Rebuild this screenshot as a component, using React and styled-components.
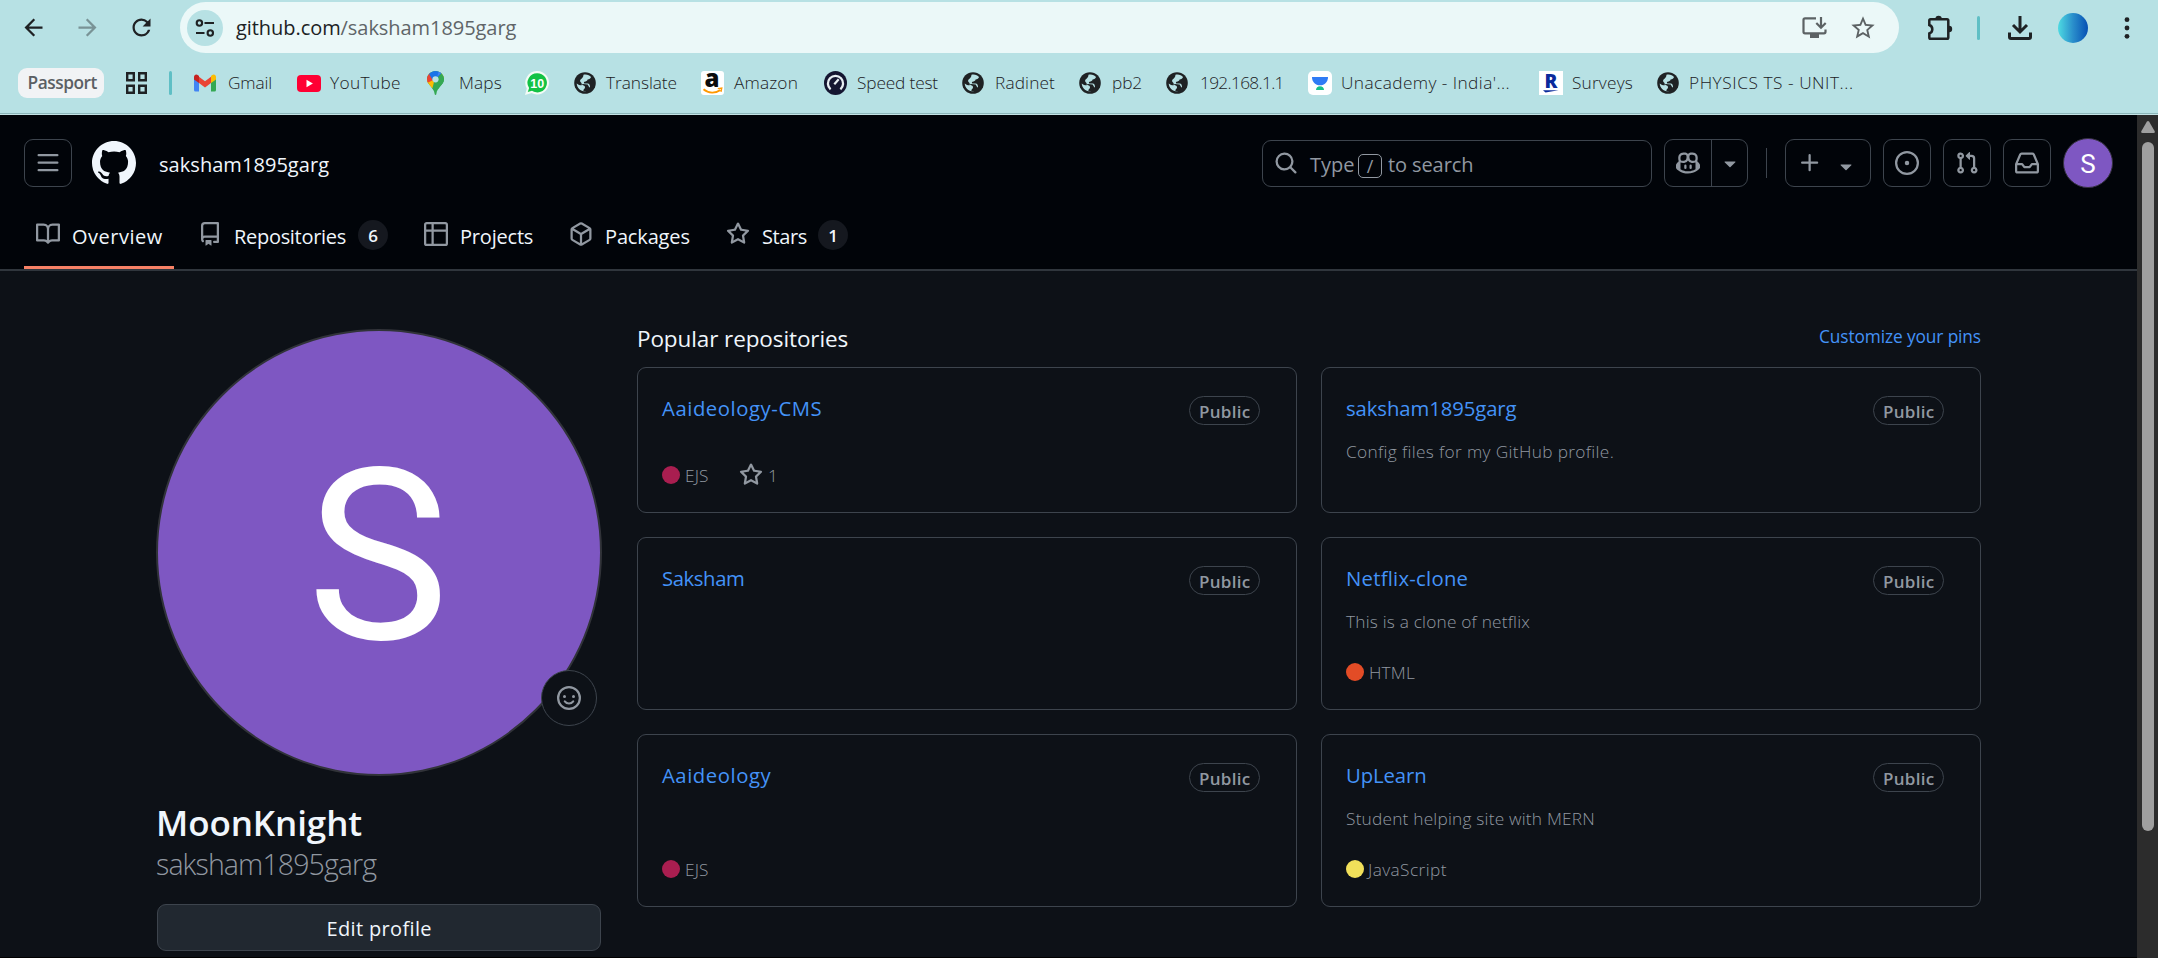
import React from "react";
import styled, { createGlobalStyle } from "styled-components";
import { MdArrowBack, MdArrowForward, MdRefresh, MdStarBorder } from "react-icons/md";

const GlobalStyle = createGlobalStyle`
  * { box-sizing: border-box; }
  html, body { margin: 0; padding: 0; background: #0d1117; overflow: hidden; }
  body { font-family: "Open Sans", "Noto Sans", sans-serif; }
`;

/* ---------- shared parts ---------- */

const Text = styled.span`
  display: block;
  flex: none;
  width: ${(p) => p.$w}px;
  letter-spacing: ${(p) => p.$ls || 0}px;
  white-space: nowrap;
`;

const Gap = styled.span`
  flex: none;
  width: ${(p) => p.$w}px;
`;

const OCTICONS = {
  bars: "M1 2.75A.75.75 0 0 1 1.75 2h12.5a.75.75 0 0 1 0 1.5H1.75A.75.75 0 0 1 1 2.75Zm0 5A.75.75 0 0 1 1.75 7h12.5a.75.75 0 0 1 0 1.5H1.75A.75.75 0 0 1 1 7.75ZM1.75 12h12.5a.75.75 0 0 1 0 1.5H1.75a.75.75 0 0 1 0-1.5Z",
  mark: "M8 0c4.42 0 8 3.58 8 8a8.013 8.013 0 0 1-5.45 7.59c-.4.08-.55-.17-.55-.38 0-.27.01-1.13.01-2.2 0-.75-.25-1.23-.54-1.48 1.78-.2 3.65-.88 3.65-3.95 0-.88-.31-1.59-.82-2.15.08-.2.36-1.02-.08-2.12 0 0-.67-.22-2.2.82-.64-.18-1.32-.27-2-.27-.68 0-1.36.09-2 .27-1.53-1.03-2.2-.82-2.2-.82-.44 1.1-.16 1.92-.08 2.12-.51.56-.82 1.28-.82 2.15 0 3.06 1.86 3.75 3.64 3.95-.23.2-.44.55-.51 1.07-.46.21-1.61.55-2.33-.66-.15-.24-.6-.83-1.23-.82-.67.01-.27.38.01.53.34.19.73.9.82 1.13.16.45.68 1.31 2.69.94 0 .67.01 1.3.01 1.49 0 .21-.15.45-.55.38A7.995 7.995 0 0 1 0 8c0-4.42 3.58-8 8-8Z",
  search: "M10.68 11.74a6 6 0 0 1-7.922-8.982 6 6 0 0 1 8.982 7.922l3.04 3.04a.749.749 0 0 1-.326 1.275.749.749 0 0 1-.734-.215ZM11.5 7a4.499 4.499 0 1 0-8.997 0A4.499 4.499 0 0 0 11.5 7Z",
  copilot: "M7.998 15.035c-4.562 0-7.873-2.914-7.998-3.749V9.338c.085-.628.677-1.686 1.588-2.065.013-.07.024-.143.036-.218.029-.183.06-.384.126-.612-.201-.508-.254-1.084-.254-1.656 0-.87.128-1.769.693-2.484.579-.733 1.494-1.124 2.724-1.261 1.206-.134 2.262.034 2.944.765.05.053.096.108.139.165.044-.057.094-.112.143-.165.682-.731 1.738-.899 2.944-.765 1.23.137 2.145.528 2.724 1.261.566.715.693 1.614.693 2.484 0 .572-.053 1.148-.254 1.656.066.228.098.429.126.612.012.076.024.148.037.218.924.385 1.522 1.471 1.591 2.095v1.872c0 .766-3.351 3.795-8.002 3.795Zm0-1.485c2.28 0 4.584-1.11 5.002-1.433V7.862l-.023-.116c-.49.21-1.075.291-1.727.291-1.146 0-2.059-.327-2.71-.991A3.222 3.222 0 0 1 8 6.303a3.24 3.24 0 0 1-.544.743c-.65.664-1.563.991-2.71.991-.652 0-1.236-.081-1.727-.291l-.023.116v4.255c.419.323 2.722 1.433 5.002 1.433ZM6.762 2.83c-.193-.206-.637-.413-1.682-.297-1.019.113-1.479.404-1.713.7-.247.312-.369.789-.369 1.554 0 .793.129 1.171.308 1.371.162.181.519.379 1.442.379.853 0 1.339-.235 1.638-.54.315-.322.527-.827.617-1.553.117-.935-.037-1.395-.241-1.614Zm4.155-.297c-1.044-.116-1.488.091-1.681.297-.204.219-.359.679-.242 1.614.091.726.303 1.231.618 1.553.299.305.784.54 1.638.54.922 0 1.28-.198 1.442-.379.179-.2.308-.578.308-1.371 0-.765-.123-1.242-.37-1.554-.233-.296-.693-.587-1.713-.7ZM6.25 9.037a.75.75 0 0 1 .75.75v1.501a.75.75 0 0 1-1.5 0V9.787a.75.75 0 0 1 .75-.75Zm4.25.75v1.501a.75.75 0 0 1-1.5 0V9.787a.75.75 0 0 1 1.5 0Z",
  caret: "m4.427 7.427 3.396 3.396a.25.25 0 0 0 .354 0l3.396-3.396A.25.25 0 0 0 11.396 7H4.604a.25.25 0 0 0-.177.427Z",
  plus: "M7.75 2a.75.75 0 0 1 .75.75V7h4.25a.75.75 0 0 1 0 1.5H8.5v4.25a.75.75 0 0 1-1.5 0V8.5H2.75a.75.75 0 0 1 0-1.5H7V2.75A.75.75 0 0 1 7.75 2Z",
  issue: "M8 9.5a1.5 1.5 0 1 0 0-3 1.5 1.5 0 0 0 0 3ZM8 0a8 8 0 1 1 0 16A8 8 0 0 1 8 0ZM1.5 8a6.5 6.5 0 1 0 13 0 6.5 6.5 0 0 0-13 0Z",
  pull: "M1.5 3.25a2.25 2.25 0 1 1 3 2.122v5.256a2.251 2.251 0 1 1-1.5 0V5.372A2.25 2.25 0 0 1 1.5 3.25Zm5.677-.177L9.573.677A.25.25 0 0 1 10 .854V2.5h1A2.5 2.5 0 0 1 13.5 5v5.628a2.251 2.251 0 1 1-1.5 0V5a1 1 0 0 0-1-1h-1v1.646a.25.25 0 0 1-.427.177L7.177 3.427a.25.25 0 0 1 0-.354ZM3.75 2.5a.75.75 0 1 0 0 1.5.75.75 0 0 0 0-1.5Zm0 9.5a.75.75 0 1 0 0 1.5.75.75 0 0 0 0-1.5Zm8.25.75a.75.75 0 1 0 1.5 0 .75.75 0 0 0-1.5 0Z",
  inbox: "M2.8 2.06A1.75 1.75 0 0 1 4.41 1h7.18c.7 0 1.333.417 1.61 1.06l2.74 6.395c.04.093.06.194.06.295v4.5A1.75 1.75 0 0 1 14.25 15H1.75A1.75 1.75 0 0 1 0 13.25v-4.5c0-.101.02-.202.06-.295Zm1.61.44a.25.25 0 0 0-.23.152L1.887 8H4.75a.75.75 0 0 1 .6.3L6.625 10h2.75l1.275-1.7a.75.75 0 0 1 .6-.3h2.863L11.82 2.652a.25.25 0 0 0-.23-.152Zm10.09 7h-2.875l-1.275 1.7a.75.75 0 0 1-.6.3h-3.5a.75.75 0 0 1-.6-.3L4.375 9.5H1.5v3.75c0 .138.112.25.25.25h12.5a.25.25 0 0 0 .25-.25Z",
  book: "M0 1.75A.75.75 0 0 1 .75 1h4.253c1.227 0 2.317.59 3 1.501A3.743 3.743 0 0 1 11.006 1h4.245a.75.75 0 0 1 .75.75v10.5a.75.75 0 0 1-.75.75h-4.507a2.25 2.25 0 0 0-1.591.659l-.622.621a.75.75 0 0 1-1.06 0l-.622-.621A2.25 2.25 0 0 0 5.258 13H.75a.75.75 0 0 1-.75-.75Zm7.251 10.324.004-5.073-.002-2.253A2.25 2.25 0 0 0 5.003 2.5H1.5v9h3.757a3.75 3.75 0 0 1 1.994.574ZM8.755 4.75l-.004 7.322a3.752 3.752 0 0 1 1.992-.572H14.5v-9h-3.495a2.25 2.25 0 0 0-2.25 2.25Z",
  repo: "M2 2.5A2.5 2.5 0 0 1 4.5 0h8.75a.75.75 0 0 1 .75.75v12.5a.75.75 0 0 1-.75.75h-2.5a.75.75 0 0 1 0-1.5h1.75v-2h-8a1 1 0 0 0-.714 1.7.75.75 0 1 1-1.072 1.05A2.495 2.495 0 0 1 2 11.5Zm10.5-1h-8a1 1 0 0 0-1 1v6.708A2.486 2.486 0 0 1 4.5 9h8ZM5 12.25a.25.25 0 0 1 .25-.25h3.5a.25.25 0 0 1 .25.25v3.25a.25.25 0 0 1-.4.2l-1.45-1.087a.249.249 0 0 0-.3 0L5.4 15.7a.25.25 0 0 1-.4-.2Z",
  table: "M0 1.75C0 .784.784 0 1.75 0h12.5C15.216 0 16 .784 16 1.75v12.5A1.75 1.75 0 0 1 14.25 16H1.75A1.75 1.75 0 0 1 0 14.25ZM6.5 6.5v8h7.75a.25.25 0 0 0 .25-.25V6.5Zm8-1.5V1.75a.25.25 0 0 0-.25-.25H6.5V5Zm-13 1.5v7.75c0 .138.112.25.25.25H5v-8ZM5 5V1.5H1.75a.25.25 0 0 0-.25.25V5Z",
  pkg: "m8.878.392 5.25 3.045c.54.314.872.89.872 1.514v6.098a1.75 1.75 0 0 1-.872 1.514l-5.25 3.045a1.75 1.75 0 0 1-1.756 0l-5.25-3.045A1.75 1.75 0 0 1 1 11.049V4.951c0-.624.332-1.201.872-1.514L7.122.392a1.75 1.75 0 0 1 1.756 0ZM7.875 1.69l-4.63 2.685L8 7.133l4.755-2.758-4.63-2.685a.248.248 0 0 0-.25 0ZM2.5 5.677v5.372c0 .09.047.171.125.216l4.625 2.683V8.432Zm6.25 8.271 4.625-2.683a.25.25 0 0 0 .125-.216V5.677L8.75 8.432Z",
  star: "M8 .25a.75.75 0 0 1 .673.418l1.882 3.815 4.21.612a.75.75 0 0 1 .416 1.279l-3.046 2.97.719 4.192a.751.751 0 0 1-1.088.791L8 12.347l-3.766 1.98a.75.75 0 0 1-1.088-.79l.72-4.194L.818 6.374a.75.75 0 0 1 .416-1.28l4.21-.611L7.327.668A.75.75 0 0 1 8 .25Zm0 2.445L6.615 5.5a.75.75 0 0 1-.564.41l-3.097.45 2.24 2.184a.75.75 0 0 1 .216.664l-.528 3.084 2.769-1.456a.75.75 0 0 1 .698 0l2.77 1.456-.53-3.084a.75.75 0 0 1 .216-.664l2.24-2.183-3.096-.45a.75.75 0 0 1-.564-.41L8 2.694Z",
};

const OctSvg = styled.svg`
  display: block;
  flex: none;
  fill: ${(p) => p.$color};
`;

const Octicon = ({ name, size = 24, color = "#9198a1", box = "0 0 16 16" }) => (
  <OctSvg width={size} height={size} viewBox={box} $color={color}>
    <path fillRule="evenodd" d={OCTICONS[name]} />
  </OctSvg>
);

const Glyph = styled.svg`
  display: block;
  flex: none;
`;

/* ---------- browser chrome ---------- */

const Chrome = styled.header`
  height: 115px;
  background: #b7e1e4;
  border-bottom: 1px solid #c4e4e6;
  box-shadow: inset 0 -1px 0 #8cb6b9;
`;

const Toolbar = styled.div`
  display: flex;
  align-items: center;
  padding-top: 2px;
  height: 53px;
`;

const NavButtons = styled.div`
  display: flex;
  gap: 27px;
  padding-left: 20px;
  width: 180px;
  color: #1f2123;
  & > svg { display: block; flex: none; }
  & > svg:nth-child(2) { opacity: 0.4; }
`;

const AddressBar = styled.div`
  display: flex;
  align-items: center;
  width: 1719px;
  height: 51px;
  padding-left: 7px;
  border-radius: 26px;
  background: #ebf8f8;
  font-size: 20px;
  color: #5f6568;
`;

const SiteInfo = styled.span`
  display: flex;
  align-items: center;
  justify-content: center;
  width: 36px;
  height: 36px;
  margin-right: 13px;
  border-radius: 50%;
  background: #b7e1e4;
`;

const Domain = styled.span`
  color: #1c2224;
`;

const AddressActions = styled.div`
  display: flex;
  align-items: center;
  gap: 22px;
  margin-left: auto;
  padding-right: 22px;
  color: #5c6264;
`;

const Divider = styled.span`
  flex: none;
  width: 3px;
  height: 24px;
  border-radius: 2px;
  background: #5fbfc5;
`;

const ProfileDot = styled.span`
  flex: none;
  width: 30px;
  height: 30px;
  border-radius: 50%;
  background: linear-gradient(90deg, #4edbe2, #2a8ecb 50%, #0650b4);
`;

const Bookmarks = styled.nav`
  display: flex;
  align-items: center;
  height: 30px;
  margin-top: 15px;
  padding-left: 18px;
  font-size: 17.3px;
  line-height: 22px;
  font-weight: 300;
  color: #1c2224;
  & > ${Text} { padding-bottom: 1px; }
`;

const GroupChip = styled.span`
  display: flex;
  align-items: center;
  justify-content: center;
  width: 86px;
  height: 30px;
  padding: 0 0 1px 2px;
  border-radius: 9px;
  background: #f1f3f5;
  color: #5b5f64;
  font-weight: 600;
`;

const GlobeIcon = () => (
  <Glyph width="22" height="22" viewBox="0 0 22 22">
    <circle cx="11" cy="11" r="10.800" fill="#1f2224" />
    <path d="M9.500 2.700C13 2 15.500 3.400 17 5c-.4 1.700-1.700 2.300-3.400 2.500-.3 1.500-1.600 1.800-3.100 2.200-.9.400-.6 1.200-.2 1.800h3.400c1.700.2 2.200 1.600 2.300 2.800.2.900-.6 1.500-1.600 1.500-1.400.2-1.400 1.500-1.900 2.600l-1 .9C6 19.200 3 15.600 2.700 11.400c1.400 1.300 3.200 1.800 5 1.900.1-1 .1-1.900-.7-2.700-1-1-1.400-2.100-.2-3.300C7.500 6.600 9.500 5.400 9.500 2.700z" fill="#b7e1e4" />
    <path d="M7.300 12.800c1.700.2 3.600.7 3.700 2.300 0 1-.3 1.600-1.100 2.200-.6.500-.5 1.300-.4 2l3.500-.2 2.600-3-1.900-3.500-4.700-.6z" fill="#1f2224" />
  </Glyph>
);

const GmailIcon = () => (
  <Glyph width="22" height="18" viewBox="0 0 22 17">
    <path d="M0 2.500v13A1.500 1.500 0 0 0 1.500 17H5V6z" fill="#4285f4" />
    <path d="M22 2.500v13a1.500 1.500 0 0 1-1.500 1.500H17V6z" fill="#34a853" />
    <path d="M5 8.600V2.300l6 4.500 6-4.500v6.300l-6 4.500z" fill="#ea4335" />
    <path d="M0 2.500C0 .2 2.400-.7 4.100.8L5 1.600v7L0 4.900z" fill="#c5221f" />
    <path d="M22 2.500C22 .2 19.600-.7 17.900.8L17 1.600v7l5-3.700z" fill="#fbbc04" />
  </Glyph>
);

const YouTubeIcon = () => (
  <Glyph width="24" height="17" viewBox="0 0 24 17">
    <rect width="24" height="17" rx="4" fill="#ff0033" />
    <path d="M9.500 4.800v7.400l6.400-3.700z" fill="#fff" />
  </Glyph>
);

const MapsIcon = () => (
  <Glyph width="17" height="24" viewBox="0 0 17 24">
    <clipPath id="pin">
      <path d="M8.500 0C3.800 0 0 3.700 0 8.300c0 6 6.700 7.200 7.700 15 .1.900 1.500.9 1.600 0C10.300 15.500 17 14.300 17 8.300 17 3.700 13.200 0 8.500 0z" />
    </clipPath>
    <g clipPath="url(#pin)">
      <rect width="17" height="24" fill="#34a853" />
      <path d="M0 17V8l8.500 0 6-8L17 6 3.500 19z" fill="#fbbc04" />
      <path d="M0 0v12l8.500-4L4 2z" fill="#ea4335" />
      <path d="M2 3 4 0h9l2 3-8.200 8z" fill="#1a73e8" />
      <path d="m7 11 7.500-9L17 5v8l-5 5-7 1z" fill="#34a853" />
      <path d="m10 6 4.500-4.500L12 0z" fill="#4285f4" />
    </g>
    <circle cx="8.500" cy="8.300" r="3.100" fill="#b7e1e4" />
  </Glyph>
);

const WhatsAppIcon = () => (
  <Glyph width="24" height="24" viewBox="0 0 24 24">
    <path d="M12.300 0A11.700 11.700 0 1 1 6.700 22L0 24l1.800-6.600A11.700 11.700 0 0 1 12.300 0z" fill="#f3fbf6" />
    <path d="M12.300 2.200A9.600 9.600 0 1 1 7 19.800l-4.200 1.300 1.300-4A9.600 9.600 0 0 1 12.300 2.200z" fill="#12c245" />
    <text x="12.300" y="16.500" textAnchor="middle" fontFamily="Liberation Sans" fontWeight="700" fontSize="12.500" fill="#fff">10</text>
  </Glyph>
);

const AmazonIcon = () => (
  <Glyph width="23" height="24" viewBox="0 0 23 24">
    <rect width="23" height="24" rx="3" fill="#fff" />
    <text x="11" y="16" textAnchor="middle" fontFamily="Open Sans" fontWeight="800" fontSize="24" fill="#0b0b0b">a</text>
    <path d="M2.500 18.300c5 4.300 12 4.300 17 .7" fill="none" stroke="#f90" strokeWidth="1.900" />
    <path d="m16.800 17.600 4-.6-.8 3.800" fill="none" stroke="#f90" strokeWidth="1.300" />
  </Glyph>
);

const SpeedIcon = () => (
  <Glyph width="23" height="24" viewBox="0 0 23 24">
    <ellipse cx="11.500" cy="12" rx="11.500" ry="12" fill="#151631" />
    <path d="M6.600 18.300a7.600 7.600 0 1 1 9.800 0" fill="none" stroke="#e8eef2" strokeWidth="2.300" />
    <path d="m10.300 13.300 4.400-5" stroke="#e8eef2" strokeWidth="2.200" />
  </Glyph>
);

const UnacademyIcon = () => (
  <Glyph width="24" height="24" viewBox="0 0 24 24">
    <rect width="24" height="24" rx="5" fill="#fff" />
    <path d="M4 6h16c0 5-3.400 8.300-8 8.300S4 11 4 6z" fill="#2f7bf5" />
    <path d="M8 19c0-2.200 1.700-3.700 4-3.700s4 1.500 4 3.700z" fill="#16c08a" />
  </Glyph>
);

const RakutenIcon = () => (
  <Glyph width="24" height="24" viewBox="0 0 24 24">
    <rect width="24" height="24" fill="#fff" />
    <text x="12" y="17" textAnchor="middle" fontFamily="Open Sans" fontWeight="800" fontSize="19" fill="#0a2a9b">R</text>
    <path d="M4 19.300h15.500L6.500 21.600z" fill="#0a2a9b" />
  </Glyph>
);

const BOOKMARKS = [
  { icon: <GmailIcon />, gap: 12, label: "Gmail", w: 44, ls: -0.15, after: 25 },
  { icon: <YouTubeIcon />, gap: 9, label: "YouTube", w: 71, ls: 0.35, after: 26 },
  { icon: <MapsIcon />, gap: 15, label: "Maps", w: 43, ls: 0.14, after: 23 },
  { icon: <WhatsAppIcon />, gap: 0, w: 0, after: 25 },
  { icon: <GlobeIcon />, gap: 10, label: "Translate", w: 71, ls: -0.06, after: 24 },
  { icon: <AmazonIcon />, gap: 10, label: "Amazon", w: 64, ls: 0.15, after: 26 },
  { icon: <SpeedIcon />, gap: 10, label: "Speed test", w: 81, ls: -0.16, after: 24 },
  { icon: <GlobeIcon />, gap: 11, label: "Radinet", w: 60, ls: 0.13, after: 24 },
  { icon: <GlobeIcon />, gap: 11, label: "pb2", w: 30, ls: -0.1, after: 24 },
  { icon: <GlobeIcon />, gap: 12, label: "192.168.1.1", w: 83, ls: -0.68, after: 25 },
  { icon: <UnacademyIcon />, gap: 9, label: "Unacademy - India'...", w: 169, ls: 0.42, after: 29 },
  { icon: <RakutenIcon />, gap: 9, label: "Surveys", w: 61, ls: 0.17, after: 24 },
  { icon: <GlobeIcon />, gap: 10, label: "PHYSICS TS - UNIT...", w: 165, ls: 0.54, after: 0 },
];

/* ---------- page frame ---------- */

const Viewport = styled.div`
  display: flex;
  height: 843px;
`;

const Page = styled.main`
  width: 2137px;
  background: #0d1117;
  border-bottom: 1px solid #000;
`;

const ScrollTrack = styled.div`
  display: flex;
  flex-direction: column;
  align-items: center;
  width: 21px;
  padding-top: 6px;
  background: #2c2c2c;
`;

const ScrollThumb = styled.div`
  width: 12px;
  height: 689px;
  margin-top: 9px;
  border-radius: 6px;
  background: #9f9f9f;
`;

/* ---------- app header ---------- */

const AppHeader = styled.div`
  height: 156px;
  padding: 0 24px;
  background: #010409;
  border-bottom: 2px solid #30363d;
`;

const HeaderRow = styled.div`
  display: flex;
  align-items: center;
  height: 96px;
  font-size: 20px;
`;

const IconBox = styled.span`
  display: flex;
  align-items: center;
  justify-content: center;
  flex: none;
  width: ${(p) => p.$w || 48}px;
  height: 48px;
  border: 1px solid #3d444d;
  border-radius: 9px;
`;

const SplitBox = styled(IconBox)`
  justify-content: flex-start;
`;

const SplitPart = styled.span`
  display: flex;
  align-items: center;
  justify-content: center;
  width: ${(p) => p.$w}px;
  height: 46px;
  border-right: ${(p) => (p.$line ? "1px solid #3d444d" : "0")};
`;

const UserCrumb = styled.span`
  margin: 3px 0 0 23px;
  color: #f0f6fc;
  font-weight: 500;
`;

const HeaderTools = styled.div`
  display: flex;
  align-items: center;
  margin-left: auto;
`;

const SearchBox = styled.div`
  display: flex;
  align-items: center;
  width: 390px;
  height: 47px;
  padding-left: 11px;
  border: 1px solid #3d444d;
  border-radius: 9px;
  color: #9198a1;
  & > ${Text} { padding-top: 3px; }
`;

const Key = styled.kbd`
  display: flex;
  align-items: center;
  justify-content: center;
  width: 24px;
  height: 24px;
  margin-top: 5px;
  border: 1px solid #9198a1;
  border-radius: 5px;
  font: 400 18px/1 "Open Sans", sans-serif;
`;

const Rule = styled.span`
  width: 1px;
  height: 30px;
  background: #3d444d;
`;

const SmallAvatar = styled.span`
  display: flex;
  align-items: center;
  justify-content: center;
  width: 50px;
  height: 50px;
  padding-top: 2px;
  border-radius: 50%;
  border: 1px solid #35323f;
  background: #7e57c2;
  font: 400 26px/1 Roboto, sans-serif;
  color: #fff;
`;

const Tabs = styled.div`
  display: flex;
  align-items: stretch;
  height: 58px;
  font-size: 20px;
  color: #f0f6fc;
`;

const Tab = styled.div`
  display: flex;
  align-items: center;
  width: ${(p) => p.$w}px;
  padding: 0 0 8px 12px;
  border-bottom: 3px solid ${(p) => (p.$active ? "#f78166" : "transparent")};
  font-weight: ${(p) => (p.$active ? 500 : 400)};
  & > svg { margin-top: -1px; }
  & > ${Text} { padding-top: 4px; }
`;

const Counter = styled.span`
  display: flex;
  align-items: center;
  justify-content: center;
  width: 30px;
  height: 30px;
  padding-top: 1px;
  border-radius: 15px;
  background: #15181f;
  font-size: 17px;
  font-weight: 600;
`;

/* ---------- profile ---------- */

const Body = styled.div`
  display: flex;
  align-items: flex-start;
  gap: 36px;
  padding: 58px 0 0 156px;
`;

const Sidebar = styled.aside`
  width: 445px;
`;

const BigAvatar = styled.div`
  position: relative;
  display: flex;
  align-items: center;
  justify-content: center;
  width: 446px;
  height: 447px;
  padding: 9px 2px 0 0;
  border: 2px solid #313339;
  border-radius: 50%;
  background: #7e57c2;
  font: 400 239px/1 Roboto, sans-serif;
  color: #fff;
`;

const StatusButton = styled.span`
  position: absolute;
  right: 3px;
  bottom: 48px;
  display: flex;
  align-items: center;
  justify-content: center;
  width: 56px;
  height: 56px;
  border: 1px solid #3d444d;
  border-radius: 50%;
  background: #0d1117;
`;

const ProfileName = styled.h1`
  margin: 25px 0 0;
  font-size: 35px;
  line-height: 44px;
  font-weight: 600;
  color: #f0f6fc;
`;

const ProfileLogin = styled.div`
  font-size: 28.5px;
  line-height: 38px;
  font-weight: 300;
  color: #9198a1;
`;

const EditButton = styled.button`
  display: flex;
  align-items: center;
  justify-content: center;
  width: 444px;
  height: 47px;
  margin: 21px 0 0 1px;
  padding: 3px 0 0;
  border: 1px solid #3d444d;
  border-radius: 9px;
  background: #212830;
  font: 500 20px/1.3 "Open Sans", sans-serif;
  text-align: left;
  color: #f0f6fc;
`;

const Repos = styled.section`
  width: 1344px;
`;

const ReposHead = styled.div`
  display: flex;
  justify-content: space-between;
  height: 38px;
  color: #f0f6fc;
  font-size: 22.5px;
  line-height: 20px;
`;

const PinsLink = styled.span`
  font-size: 17.3px;
  font-weight: 400;
  line-height: 16px;
  color: #4493f8;
`;

const CardGrid = styled.div`
  display: grid;
  grid-template-columns: 660px 660px;
  grid-template-rows: 146px 173px 173px;
  gap: 24px;
`;

const Card = styled.article`
  display: flex;
  flex-direction: column;
  padding: 28px 36px 25px 24px;
  border: 1px solid #3d444d;
  border-radius: 9px;
  font-size: 17.3px;
  font-weight: 300;
  color: #9198a1;
`;

const CardTop = styled.div`
  display: flex;
  justify-content: space-between;
  height: 29px;
  font-size: 20.3px;
  font-weight: 500;
  line-height: 24px;
  color: #4493f8;
`;

const Badge = styled.span`
  display: flex;
  align-items: center;
  justify-content: center;
  width: 71px;
  height: 29px;
  padding: 3px 0 0 1px;
  border: 1px solid #3d444d;
  border-radius: 15px;
  font-size: 17px;
  font-weight: 600;
  line-height: 24px;
  color: #9198a1;
`;

const Description = styled.p`
  margin: 15px 0 0;
  line-height: 24px;
`;

const Meta = styled.div`
  display: flex;
  align-items: center;
  height: 24px;
  margin-top: auto;
`;

const LanguageDot = styled.span`
  width: 18px;
  height: 18px;
  margin-right: ${(p) => p.$gap}px;
  border-radius: 50%;
  background: ${(p) => p.$color};
`;

const REPOS = [
  { name: "Aaideology-CMS", w: 160, ls: 0.56, lang: { label: "EJS", color: "#a91e50", w: 24, ls: 0.1, gap: 5 }, stars: "1" },
  { name: "saksham1895garg", w: 172, ls: -0.08, desc: "Config files for my GitHub profile.", dw: 268, dls: 0.34 },
  { name: "Saksham", w: 84, ls: -0.4 },
  { name: "Netflix-clone", w: 122, ls: 0.25, desc: "This is a clone of netflix", dw: 184, dls: 0.19, lang: { label: "HTML", color: "#e34c26", w: 46, ls: 0.18, gap: 5 } },
  { name: "Aaideology", w: 110, ls: 0.55, lang: { label: "EJS", color: "#a91e50", w: 24, ls: 0.1, gap: 5 } },
  { name: "UpLearn", w: 81, ls: -0.1, desc: "Student helping site with MERN", dw: 250, dls: 0.2, lang: { label: "JavaScript", color: "#f1e05a", w: 80, ls: 0.4, gap: 4 } },
];

const RepoCard = ({ repo }) => (
  <Card>
    <CardTop>
      <Text $w={repo.w} $ls={repo.ls}>{repo.name}</Text>
      <Badge><Text $w={52} $ls={0.3}>Public</Text></Badge>
    </CardTop>
    {repo.desc && <Description><Text $w={repo.dw} $ls={repo.dls}>{repo.desc}</Text></Description>}
    {repo.lang && (
      <Meta>
        <LanguageDot $color={repo.lang.color} $gap={repo.lang.gap} />
        <Text $w={repo.lang.w} $ls={repo.lang.ls}>{repo.lang.label}</Text>
        {repo.stars && (<><Gap $w={30} /><Octicon name="star" /><Gap $w={5} /><Text $w={10}>{repo.stars}</Text></>)}
      </Meta>
    )}
  </Card>
);

export default function App() {
  return (
    <>
      <GlobalStyle />
      <Chrome>
        <Toolbar>
          <NavButtons>
            <MdArrowBack size={27} />
            <MdArrowForward size={27} />
            <MdRefresh size={27} />
          </NavButtons>
          <AddressBar>
            <SiteInfo>
              <Glyph width="20" height="18" viewBox="0 0 20 18" fill="none" stroke="#1f2224" strokeWidth="2.100">
                <circle cx="4.400" cy="4" r="2.700" /><path d="M9.500 4H19M1 14h8.500" /><circle cx="15.300" cy="14" r="2.700" />
              </Glyph>
            </SiteInfo>
            <Text $w={283} $ls={-0.06}><Domain>github.com</Domain>/saksham1895garg</Text>
            <AddressActions>
              <Glyph width="25" height="22" viewBox="0 0 25 22" fill="none" stroke="#5c6264" strokeWidth="2.200">
                <path d="M14 1.300H3q-1.500 0-1.500 1.500v12q0 1.500 1.500 1.500h19q1.500 0 1.500-1.500V12.500M19 0v10M14.300 6l4.700 4.700L23.700 6" />
                <path d="M8 16h9v5H8z" fill="#5c6264" stroke="none" />
              </Glyph>
              <MdStarBorder size={28} />
            </AddressActions>
          </AddressBar>
          <Gap $w={28} />
          <Glyph width="26" height="26" viewBox="0 0 26 26">
            <path d="M2.300 5.500q0-1.300 1.300-1.300H20q1.300 0 1.300 1.300V22.500q0 1.300-1.300 1.300H3.600q-1.300 0-1.300-1.300V18.500a4.500 4.500 0 0 0 0-8.500z" fill="none" stroke="#1f2224" strokeWidth="2.500" />
            <path d="M8.400 4a3.200 3.200 0 0 1 6.400 0zM22 10.800a3.200 3.200 0 0 1 0 6.400z" fill="#1f2224" />
          </Glyph>
          <Gap $w={24} />
          <Divider />
          <Gap $w={28} />
          <Glyph width="24" height="24" viewBox="0 0 24 24" fill="none" stroke="#1f2224" strokeWidth="3">
            <path d="M12 0v15M5 9l7 7 7-7M1.500 16.500v4.500q0 1.500 1.500 1.500h18q1.500 0 1.500-1.500v-4.500" />
          </Glyph>
          <Gap $w={26} />
          <ProfileDot />
          <Gap $w={36} />
          <Glyph width="6" height="22" viewBox="0 0 6 22" fill="#1f2224">
            <circle cx="3" cy="2.700" r="2.400" /><circle cx="3" cy="11" r="2.400" /><circle cx="3" cy="19.300" r="2.400" />
          </Glyph>
        </Toolbar>
        <Bookmarks>
          <GroupChip><Text $w={69} $ls={-0.45}>Passport</Text></GroupChip>
          <Gap $w={22} />
          <Glyph width="21" height="22" viewBox="0 0 21 22" fill="none" stroke="#1f2224" strokeWidth="2.400">
            <path d="M1.200 1.200h6.600v7H1.200zM13.200 1.200h6.600v7h-6.600zM1.200 13.800h6.600v7H1.200zM13.200 13.800h6.600v7h-6.600z" />
          </Glyph>
          <Gap $w={22} />
          <Divider />
          <Gap $w={22} />
          {BOOKMARKS.map((b, i) => (
            <React.Fragment key={i}>
              {b.icon}
              <Gap $w={b.gap} />
              {b.label && <Text $w={b.w} $ls={b.ls}>{b.label}</Text>}
              <Gap $w={b.after} />
            </React.Fragment>
          ))}
        </Bookmarks>
      </Chrome>
      <Viewport>
        <Page>
          <AppHeader>
            <HeaderRow>
              <IconBox><Octicon name="bars" /></IconBox>
              <Gap $w={20} />
              <Octicon name="mark" size={44} color="#f0f6fc" />
              <UserCrumb><Text $w={172} $ls={0.05}>saksham1895garg</Text></UserCrumb>
              <HeaderTools>
                <SearchBox>
                  <Octicon name="search" />
                  <Gap $w={12} />
                  <Text $w={48}>Type</Text>
                  <Key>/</Key>
                  <Gap $w={6} />
                  <Text $w={86} $ls={-0.1}>to search</Text>
                </SearchBox>
                <Gap $w={12} />
                <SplitBox $w={84}>
                  <SplitPart $w={48} $line><Octicon name="copilot" /></SplitPart>
                  <SplitPart $w={35}><Octicon name="caret" /></SplitPart>
                </SplitBox>
                <Gap $w={18} />
                <Rule />
                <Gap $w={18} />
                <IconBox $w={86}>
                  <Octicon name="plus" /><Gap $w={12} /><Octicon name="caret" box="0 -2 16 16" />
                </IconBox>
                <Gap $w={12} />
                <IconBox><Octicon name="issue" /></IconBox>
                <Gap $w={12} />
                <IconBox><Octicon name="pull" /></IconBox>
                <Gap $w={12} />
                <IconBox><Octicon name="inbox" /></IconBox>
                <Gap $w={12} />
                <SmallAvatar>S</SmallAvatar>
              </HeaderTools>
            </HeaderRow>
            <Tabs>
              <Tab $w={150} $active><Octicon name="book" /><Gap $w={12} /><Text $w={91} $ls={0.5}>Overview</Text></Tab>
              <Tab $w={226}><Gap $w={12} /><Octicon name="repo" /><Gap $w={12} /><Text $w={112} $ls={-0.3}>Repositories</Text><Gap $w={12} /><Counter>6</Counter></Tab>
              <Tab $w={145}><Gap $w={12} /><Octicon name="table" /><Gap $w={12} /><Text $w={75} $ls={-0.2}>Projects</Text></Tab>
              <Tab $w={157}><Gap $w={12} /><Octicon name="pkg" /><Gap $w={12} /><Text $w={86} $ls={-0.15}>Packages</Text></Tab>
              <Tab $w={150}><Gap $w={12} /><Octicon name="star" /><Gap $w={12} /><Text $w={46} $ls={-0.4}>Stars</Text><Gap $w={10} /><Counter>1</Counter></Tab>
            </Tabs>
          </AppHeader>
          <Body>
            <Sidebar>
              <BigAvatar>
                S
                <StatusButton>
                  <Glyph width="24" height="24" viewBox="0 0 16 16" fill="#9198a1">
                    <circle cx="8" cy="8" r="7.250" fill="none" stroke="#9198a1" strokeWidth="1.500" />
                    <circle cx="5" cy="7" r="1" /><circle cx="11" cy="7" r="1" />
                    <path d="M5.200 10.200c1.400 1.900 4.200 1.900 5.600 0" fill="none" stroke="#9198a1" strokeWidth="1.400" strokeLinecap="round" />
                  </Glyph>
                </StatusButton>
              </BigAvatar>
              <ProfileName><Text $w={206} $ls={-0.1}>MoonKnight</Text></ProfileName>
              <ProfileLogin><Text $w={221} $ls={-0.88}>saksham1895garg</Text></ProfileLogin>
              <EditButton><Text $w={105} $ls={0.35}>Edit profile</Text></EditButton>
            </Sidebar>
            <Repos>
              <ReposHead>
                <Text $w={212} $ls={-0.1}>Popular repositories</Text>
                <PinsLink><Text $w={162} $ls={-0.1}>Customize your pins</Text></PinsLink>
              </ReposHead>
              <CardGrid>
                {REPOS.map((r) => <RepoCard key={r.name} repo={r} />)}
              </CardGrid>
            </Repos>
          </Body>
        </Page>
        <ScrollTrack>
          <Glyph width="14" height="12" viewBox="0 0 14 12"><path d="M7 0q.7 0 1.200.800l5.500 9.400q.6 1.800-1.200 1.800h-11q-1.800 0-1.200-1.800L5.800.8Q6.300 0 7 0z" fill="#9f9f9f" /></Glyph>
          <ScrollThumb />
        </ScrollTrack>
      </Viewport>
    </>
  );
}
